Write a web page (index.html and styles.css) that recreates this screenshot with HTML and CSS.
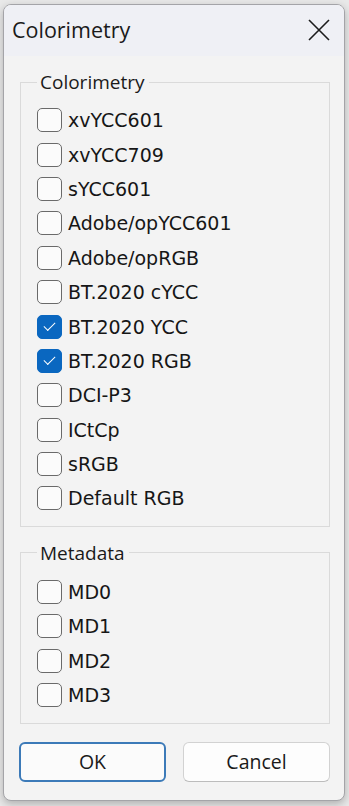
FILE: index.html
```html
<!DOCTYPE html>
<html lang="en">
<head>
  <meta charset="UTF-8" />
  <meta name="viewport" content="width=device-width, initial-scale=1.0"/>
  <title>Colorimetry</title>
  <link rel="stylesheet" href="styles.css">
</head>
<body>
  <div class="dialog">
    <header class="titlebar">
      <span class="title">Colorimetry</span>
      <button class="close" aria-label="Close">
        <svg width="22" height="22" viewBox="0 0 22 22">
          <path d="M1 1 L21 21 M21 1 L1 21" stroke="#1c1c1c" stroke-width="1.6" fill="none"/>
        </svg>
      </button>
    </header>

    <main class="content">
      <fieldset class="group group-color">
        <legend>Colorimetry</legend>
        <label class="row"><input type="checkbox"><span class="box"></span>xvYCC601</label>
        <label class="row"><input type="checkbox"><span class="box"></span>xvYCC709</label>
        <label class="row"><input type="checkbox"><span class="box"></span>sYCC601</label>
        <label class="row"><input type="checkbox"><span class="box"></span>Adobe/opYCC601</label>
        <label class="row"><input type="checkbox"><span class="box"></span>Adobe/opRGB</label>
        <label class="row"><input type="checkbox"><span class="box"></span>BT.2020 cYCC</label>
        <label class="row"><input type="checkbox" checked><span class="box"></span>BT.2020 YCC</label>
        <label class="row"><input type="checkbox" checked><span class="box"></span>BT.2020 RGB</label>
        <label class="row"><input type="checkbox"><span class="box"></span>DCI-P3</label>
        <label class="row"><input type="checkbox"><span class="box"></span>ICtCp</label>
        <label class="row"><input type="checkbox"><span class="box"></span>sRGB</label>
        <label class="row"><input type="checkbox"><span class="box"></span>Default RGB</label>
      </fieldset>

      <fieldset class="group group-meta">
        <legend>Metadata</legend>
        <label class="row"><input type="checkbox"><span class="box"></span>MD0</label>
        <label class="row"><input type="checkbox"><span class="box"></span>MD1</label>
        <label class="row"><input type="checkbox"><span class="box"></span>MD2</label>
        <label class="row"><input type="checkbox"><span class="box"></span>MD3</label>
      </fieldset>

      <div class="actions">
        <button class="btn btn-default">OK</button>
        <button class="btn">Cancel</button>
      </div>
    </main>
  </div>
</body>
</html>
```

FILE: styles.css
```css
body {
  margin: 0;
  padding: 0;
  height: 806px;
  overflow: hidden;
  background-color: #e9e9e9;
  font-family: 'Open Sans', sans-serif;
}

.dialog {
  box-sizing: border-box;
  width: 342px;
  height: 797px;
  margin: 4px 0 0 3px;
  background-color: #f3f3f3;
  border: 1px solid #a4a4a8;
  border-radius: 8px;
  box-shadow: 0 3px 8px rgba(0, 0, 0, 0.25);
  display: flex;
  flex-direction: column;
  overflow: hidden;
}

.titlebar {
  height: 51px;
  flex-shrink: 0;
  display: flex;
  align-items: center;
  justify-content: space-between;
  padding: 0 14px 0 8px;
  background-color: #eff0f5;
}

.title {
  font-size: 21.5px;
  color: #1a1a1a;
  margin-top: -2px;
}

.close {
  background: none;
  border: none;
  padding: 0;
  width: 22px;
  height: 22px;
  margin-top: -2px;
}

.close svg {
  display: block;
}

.content {
  padding: 14px 14px 0 16px;
  display: flex;
  flex-direction: column;
}

.group {
  margin: 0;
  width: 310px;
  box-sizing: border-box;
  border: 1px solid #dadada;
  padding: 0 0 0 16px;
}

.group legend {
  font-family: 'Open Sans', sans-serif;
  font-size: 19px;
  line-height: 24px;
  color: #1a1a1a;
  padding: 0 4px 0 3px;
}

.group-color {
  padding-top: 9px;
  padding-bottom: 10px;
}

.group-meta {
  margin-top: 14px;
  padding-top: 10px;
  padding-bottom: 11px;
}

.row {
  display: flex;
  align-items: center;
  height: 34.4px;
  font-family: 'DejaVu Sans', sans-serif;
  font-size: 19px;
  color: #161616;
}

.row input {
  display: none;
}

.box {
  box-sizing: border-box;
  width: 25px;
  height: 24px;
  margin-right: 6px;
  border: 1.5px solid #6a6a6a;
  border-radius: 5px;
  background-color: #fbfbfb;
  display: flex;
  align-items: center;
  justify-content: center;
}

.row input:checked + .box {
  background-color: #0a67c0;
  border-color: #0a67c0;
}

.row input:checked + .box::after {
  content: "";
  width: 10px;
  height: 5px;
  border-left: 1.5px solid #fff;
  border-bottom: 1.5px solid #fff;
  transform: rotate(-45deg);
  margin-top: -3px;
}

.actions {
  display: flex;
  justify-content: space-between;
  width: 311px;
  margin-top: 18px;
  margin-left: -1px;
}

.btn {
  box-sizing: border-box;
  width: 147px;
  height: 40px;
  font-family: 'Open Sans', sans-serif;
  font-size: 19.5px;
  color: #1a1a1a;
  background-color: #fdfdfd;
  border: 1px solid #d2d2d2;
  border-bottom-color: #bcbcbc;
  border-radius: 6px;
  padding: 0 0 2px 0;
}

.btn-default {
  border: 2px solid #3c7ab8;
  background-color: #fbfbfb;
}
```
